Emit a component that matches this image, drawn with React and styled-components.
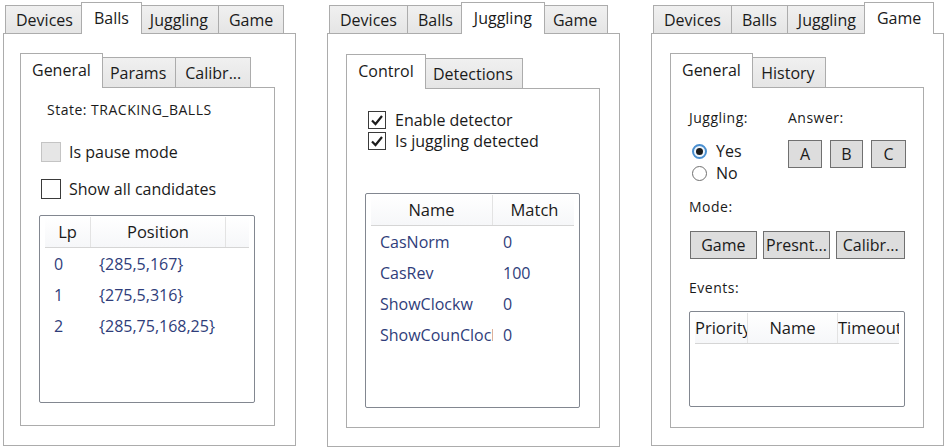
import React from 'react';
import styled, { createGlobalStyle } from 'styled-components';

const OUTER_TABS = ['Devices', 'Balls', 'Juggling', 'Game'];

const GlobalStyle = createGlobalStyle`
  body {
    margin: 0;
    background: #ffffff;
    font-family: "Open Sans", "Noto Sans", sans-serif;
    color: #1a1a1a;
  }
`;

const Page = styled.div`
  display: grid;
  grid-template-columns: repeat(3, 293px);
  column-gap: 31px;
  padding-left: 3px;
  width: 945px;
  height: 448px;
  box-sizing: border-box;
  overflow: hidden;
`;

const TabControl = styled.div`
  display: flex;
  flex-direction: column;
  height: ${({ $height }) => ($height ? `${$height}px` : 'auto')};
  flex: ${({ $height }) => ($height ? 'none' : '1')};
  min-height: 0;
`;

const TabStrip = styled.div`
  display: flex;
  align-items: flex-end;
  height: ${({ $h }) => $h}px;
  padding-left: 2px;
  flex-shrink: 0;
`;

const Tab = styled.div`
  box-sizing: border-box;
  position: relative;
  z-index: ${({ $active }) => ($active ? 2 : 1)};
  height: ${({ $active, $h, $lift }) => ($active ? $h + $lift + 1 : $h)}px;
  min-width: ${({ $minW, $active }) => ($active ? $minW + 4 : $minW)}px;
  padding: 0 ${({ $active, $padX }) => ($active ? $padX + 2 : $padX)}px;
  margin-left: ${({ $active, $first }) => ($active ? ($first ? -2 : -3) : $first ? 0 : -1)}px;
  margin-right: ${({ $active }) => ($active ? -2 : 0)}px;
  margin-bottom: ${({ $active }) => ($active ? -1 : 0)}px;
  padding-bottom: ${({ $active }) => ($active ? 2 : 0)}px;
  border: 1px solid #acacac;
  border-bottom: none;
  background: ${({ $active }) => ($active ? '#ffffff' : 'linear-gradient(#f0f0f0, #e5e5e5)')};
  display: flex;
  align-items: center;
  justify-content: center;
  font-size: 16px;
  white-space: nowrap;
`;

const TabPanel = styled.div`
  flex: 1;
  min-height: 0;
  box-sizing: border-box;
  border: 1px solid #acacac;
  background: #ffffff;
  display: flex;
  flex-direction: column;
  padding: ${({ $pad }) => $pad};
`;

const SmallLabel = styled.div`
  font-size: 14px;
  letter-spacing: 0.5px;
  line-height: 18px;
  height: 18px;
  margin-left: ${({ $indent }) => $indent || 0}px;
  margin-top: ${({ $mt }) => $mt || 0}px;
  white-space: nowrap;
`;

const CheckRow = styled.div`
  display: flex;
  align-items: center;
  gap: ${({ $gap }) => $gap}px;
  height: ${({ $h }) => $h}px;
  margin-left: ${({ $indent }) => $indent}px;
  margin-top: ${({ $mt }) => $mt || 0}px;
  font-size: 16px;
  white-space: nowrap;
`;

const Box = styled.span`
  width: ${({ $size }) => $size}px;
  height: ${({ $size }) => $size}px;
  box-sizing: border-box;
  border: 1px solid ${({ $disabled }) => ($disabled ? '#c4c4c4' : '#3a3a3a')};
  background: ${({ $disabled }) => ($disabled ? '#e6e6e6' : '#ffffff')};
  display: flex;
  align-items: center;
  justify-content: center;
  flex-shrink: 0;
`;

const RadioRow = styled.div`
  display: flex;
  align-items: center;
  gap: 9px;
  height: 22px;
  padding-left: 3px;
  font-size: 16px;
`;

const RadioDot = styled.span`
  width: 15px;
  height: 15px;
  border-radius: 50%;
  box-sizing: border-box;
  border: ${({ $on }) => ($on ? '2px solid #4a8fd0' : '1px solid #707070')};
  background: ${({ $on }) => ($on ? '#eef5fc' : '#ffffff')};
  display: flex;
  align-items: center;
  justify-content: center;

  &::after {
    content: '';
    display: ${({ $on }) => ($on ? 'block' : 'none')};
    width: 7px;
    height: 7px;
    border-radius: 50%;
    background: #1c1c1c;
  }
`;

const ButtonRow = styled.div`
  display: flex;
  gap: ${({ $gap }) => $gap}px;
  margin-top: ${({ $mt }) => $mt || 0}px;
  margin-left: ${({ $indent }) => $indent || 0}px;
`;

const Button = styled.div`
  width: ${({ $w }) => $w}px;
  height: 28px;
  box-sizing: border-box;
  border: 1px solid #707070;
  background: #dddddd;
  display: flex;
  align-items: center;
  justify-content: center;
  font-size: 16px;
  white-space: nowrap;
  overflow: hidden;
`;

const ListBox = styled.div`
  width: ${({ $w }) => $w}px;
  height: ${({ $h }) => $h}px;
  margin-top: ${({ $mt }) => $mt || 0}px;
  box-sizing: border-box;
  border: 1px solid #828790;
  border-radius: 2px;
  background: #ffffff;
  padding: 1px 5px;
  overflow: hidden;
  flex-shrink: 0;
`;

const HeaderRow = styled.div`
  display: grid;
  grid-template-columns: ${({ $cols }) => $cols};
  height: 30px;
  border-bottom: 1px solid #d5d5d5;
  background: linear-gradient(#ffffff, #f6f7f9);
`;

const HeaderCell = styled.div`
  border-right: 1px solid #e3e3e3;
  font-size: 16.5px;
  line-height: 30px;
  text-align: center;
  white-space: nowrap;
  overflow: hidden;

  &:last-child {
    border-right: none;
  }
`;

const Row = styled.div`
  display: grid;
  grid-template-columns: ${({ $cols }) => $cols};
  height: 31px;
  align-items: center;
  color: #2f3d7a;
  font-size: 16px;
`;

const Cell = styled.div`
  padding-left: ${({ $pl }) => $pl || 9}px;
  padding-right: 6px;
  white-space: nowrap;
  overflow: hidden;
`;

const AnswerGrid = styled.div`
  display: grid;
  grid-template-columns: 99px auto;
  row-gap: 13px;
`;

const CheckMark = () => (
  <svg width="14" height="14" viewBox="0 0 14 14">
    <path d="M2 7.5 L5.5 11 L12 3" fill="none" stroke="#1c1c1c" strokeWidth="2.2" />
  </svg>
);

const CheckBox = ({ size, gap, h, indent, mt, checked, disabled, children }) => (
  <CheckRow $gap={gap} $h={h} $indent={indent} $mt={mt}>
    <Box $size={size} $disabled={disabled}>{checked && <CheckMark />}</Box>
    {children}
  </CheckRow>
);

const Tabs = ({ items, active, inner, pad, height, children }) => {
  const h = inner ? 30 : 28;
  const lift = inner ? 4 : 3;
  return (
    <TabControl $height={height}>
      <TabStrip $h={inner ? 34 : 33}>
        {items.map((t, i) => (
          <Tab
            key={t}
            $active={i === active}
            $first={i === 0}
            $h={h}
            $lift={lift}
            $padX={inner ? 9 : 10}
            $minW={inner ? 76 : 0}
          >
            {t}
          </Tab>
        ))}
      </TabStrip>
      <TabPanel $pad={pad}>{children}</TabPanel>
    </TabControl>
  );
};

const List = ({ cols, headers, rows, w, h, mt, cellPad }) => (
  <ListBox $w={w} $h={h} $mt={mt}>
    <HeaderRow $cols={cols}>
      {headers.map((x, i) => <HeaderCell key={i}>{x}</HeaderCell>)}
    </HeaderRow>
    {rows.map((r, i) => (
      <Row key={i} $cols={cols}>
        {r.map((c, j) => <Cell key={j} $pl={cellPad && cellPad[j]}>{c}</Cell>)}
      </Row>
    ))}
  </ListBox>
);

const BallsWindow = () => (
  <Tabs items={OUTER_TABS} active={1} height={446} pad="19px 20px 19px 16px">
    <Tabs items={['General', 'Params', 'Calibr...']} active={0} inner pad="13px 19px 0 18px">
      <SmallLabel $indent={8}>State: TRACKING_BALLS</SmallLabel>
      <CheckBox size={20} gap={8} h={20} indent={2} mt={23} disabled>Is pause mode</CheckBox>
      <CheckBox size={20} gap={8} h={20} indent={2} mt={17}>Show all candidates</CheckBox>
      <List
        w={216}
        h={188}
        mt={16}
        cols="46px 135px 1fr"
        headers={['Lp', 'Position', '']}
        cellPad={[9, 8, 0]}
        rows={[
          ['0', '{285,5,167}', ''],
          ['1', '{275,5,316}', ''],
          ['2', '{285,75,168,25}', ''],
        ]}
      />
    </Tabs>
  </Tabs>
);

const JugglingWindow = () => (
  <Tabs items={OUTER_TABS} active={2} height={447} pad="20px 19px 18px 18px">
    <Tabs items={['Control', 'Detections']} active={0} inner pad="20px 19px 0 18px">
      <CheckBox size={18} gap={9} h={21} indent={3} checked>Enable detector</CheckBox>
      <CheckBox size={18} gap={9} h={21} indent={3} checked>Is juggling detected</CheckBox>
      <List
        w={215}
        h={215}
        mt={42}
        cols="122px 83px"
        headers={['Name', 'Match']}
        cellPad={[9, 10]}
        rows={[
          ['CasNorm', '0'],
          ['CasRev', '100'],
          ['ShowClockw', '0'],
          ['ShowCounClockw', '0'],
        ]}
      />
    </Tabs>
  </Tabs>
);

const GameWindow = () => (
  <Tabs items={OUTER_TABS} active={3} height={446} pad="19px 19px 17px 18px">
    <Tabs items={['General', 'History']} active={0} inner pad="21px 18px 0 18px">
      <AnswerGrid>
        <SmallLabel>Juggling:</SmallLabel>
        <SmallLabel>Answer:</SmallLabel>
        <div>
          <RadioRow><RadioDot $on />Yes</RadioRow>
          <RadioRow><RadioDot />No</RadioRow>
        </div>
        <ButtonRow $gap={8}>
          <Button $w={34}>A</Button>
          <Button $w={33}>B</Button>
          <Button $w={35}>C</Button>
        </ButtonRow>
      </AnswerGrid>
      <SmallLabel $mt={14}>Mode:</SmallLabel>
      <ButtonRow $gap={6} $mt={15} $indent={1}>
        <Button $w={67}>Game</Button>
        <Button $w={68}>Presnt...</Button>
        <Button $w={69}>Calibr...</Button>
      </ButtonRow>
      <SmallLabel $mt={20}>Events:</SmallLabel>
      <List
        w={216}
        h={96}
        mt={14}
        cols="53px 90px 1fr"
        headers={['Priority', 'Name', 'Timeout']}
        rows={[]}
      />
    </Tabs>
  </Tabs>
);

export default function App() {
  return (
    <>
      <GlobalStyle />
      <Page>
        <BallsWindow />
        <JugglingWindow />
        <GameWindow />
      </Page>
    </>
  );
}
